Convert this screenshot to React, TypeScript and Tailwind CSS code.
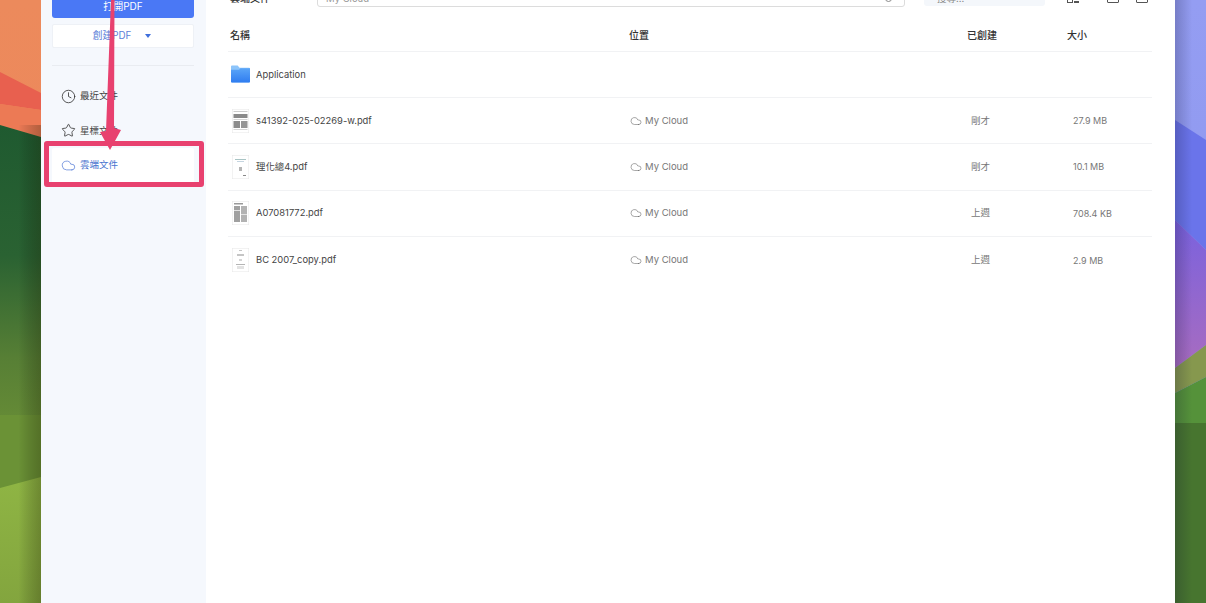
import { ReactElement } from "react"
import { ChevronRight, Clock, Cloud, Star } from "lucide-react"

const FONT = "font-['Inter','Noto_Sans_CJK_TC',sans-serif]"

const LeftWallpaper = (): ReactElement => (
  <svg className="h-full w-[41px] shrink-0" viewBox="0 0 41 603" preserveAspectRatio="none">
    <defs>
      <linearGradient id="lTop" x1="0" y1="0" x2="0" y2="1">
        <stop offset="0" stopColor="#ec8a5c" />
        <stop offset="1" stopColor="#f0855a" />
      </linearGradient>
      <linearGradient id="lGreen" x1="0" y1="0" x2="0" y2="1">
        <stop offset="0" stopColor="#1f5a30" />
        <stop offset="0.45" stopColor="#2a6232" />
        <stop offset="0.8" stopColor="#577f35" />
        <stop offset="1" stopColor="#648a36" />
      </linearGradient>
      <linearGradient id="lHill" x1="0" y1="0" x2="0" y2="1">
        <stop offset="0" stopColor="#8fb544" />
        <stop offset="1" stopColor="#83a53e" />
      </linearGradient>
      <linearGradient id="lEdge" x1="0" y1="0" x2="1" y2="0">
        <stop offset="0.45" stopColor="#000" stopOpacity="0" />
        <stop offset="1" stopColor="#1a1a00" stopOpacity="0.28" />
      </linearGradient>
    </defs>
    <rect width="41" height="603" fill="url(#lTop)" />
    <polygon points="0,72 41,93 41,110 0,104" fill="#e8604f" />
    <polygon points="0,104 41,110 41,137 0,125" fill="#ec7a55" />
    <polygon points="0,125 41,137 41,416 0,416" fill="url(#lGreen)" />
    <rect y="415" width="41" height="75" fill="#6b9236" />
    <polygon points="0,488 41,477 41,603 0,603" fill="url(#lHill)" />
    <rect x="0" y="125" width="41" height="478" fill="url(#lEdge)" />
  </svg>
)

const RightWallpaper = (): ReactElement => (
  <svg className="h-full w-[31px] shrink-0" viewBox="0 0 31 603" preserveAspectRatio="none">
    <defs>
      <linearGradient id="rPurple" x1="0" y1="0" x2="0" y2="1">
        <stop offset="0" stopColor="#7a62de" />
        <stop offset="1" stopColor="#a86cc0" />
      </linearGradient>
      <linearGradient id="rTop" x1="0" y1="0" x2="0" y2="1">
        <stop offset="0" stopColor="#949df2" />
        <stop offset="1" stopColor="#8a94ee" />
      </linearGradient>
      <linearGradient id="rEdge" x1="0" y1="0" x2="1" y2="0">
        <stop offset="0" stopColor="#101030" stopOpacity="0.22" />
        <stop offset="0.55" stopColor="#101030" stopOpacity="0" />
      </linearGradient>
    </defs>
    <rect width="31" height="603" fill="url(#rTop)" />
    <polygon points="0,120 31,140 31,250 0,220" fill="#6a74ea" />
    <polygon points="0,220 31,250 31,345 0,368" fill="url(#rPurple)" />
    <polygon points="0,368 31,345 31,377 0,393" fill="#86984e" />
    <polygon points="0,393 31,377 31,423 0,423" fill="#55923a" />
    <rect y="423" width="31" height="180" fill="#47752f" />
    <rect width="31" height="603" fill="url(#rEdge)" />
  </svg>
)

const FolderIcon = (): ReactElement => (
  <svg width="19" height="18" viewBox="0 0 20 18" className="mb-[2px]">
    <defs>
      <linearGradient id="folder" x1="0" y1="0" x2="0" y2="1">
        <stop offset="0" stopColor="#5aa5f8" />
        <stop offset="1" stopColor="#2f7cf0" />
      </linearGradient>
    </defs>
    <path d="M1 0h6l2 2.5h10a1 1 0 0 1 1 1V17a1 1 0 0 1-1 1H1a1 1 0 0 1-1-1V1a1 1 0 0 1 1-1z" fill="#8cc4fa" />
    <path d="M0 4.5l8.5 0 1.5-1.5h10V17a1 1 0 0 1-1 1H1a1 1 0 0 1-1-1z" fill="url(#folder)" />
  </svg>
)

const Thumb = ({ kind }: { kind: number }): ReactElement => (
  <svg width="17" height="24" viewBox="0 0 17 24" className="shrink-0">
    <rect x="0.25" y="0.25" width="16.5" height="23.5" fill="#fff" stroke="#e6e6e6" strokeWidth="0.5" />
    {kind === 0 && (
      <g>
        <rect x="1.5" y="2" width="14" height="1" fill="#ccc" />
        <rect x="1.5" y="5" width="14" height="4" fill="#8a8a8a" />
        <rect x="1.5" y="10" width="14" height="1" fill="#d5d5d5" />
        <rect x="1.5" y="12" width="6.5" height="7" fill="#8c8c8c" />
        <rect x="9" y="12" width="6.5" height="7" fill="#969696" />
        <rect x="1.5" y="20" width="14" height="1" fill="#d5d5d5" />
      </g>
    )}
    {kind === 1 && (
      <g>
        <rect x="3" y="4" width="11" height="1" fill="#a9c4c4" />
        <rect x="5" y="6" width="7" height="1" fill="#c5d5e0" />
        <rect x="7" y="12" width="3" height="4" fill="#b5b5b5" />
        <rect x="11" y="20" width="3" height="1" fill="#888" />
      </g>
    )}
    {kind === 2 && (
      <g>
        <rect x="2" y="2" width="9" height="1.5" fill="#999" />
        <rect x="2" y="5" width="6" height="16" fill="#a0a0a0" />
        <rect x="9" y="5" width="6" height="16" fill="#b2b2b2" />
        <rect x="2" y="9" width="6" height="1" fill="#e2e2e2" />
        <rect x="9" y="13" width="6" height="1" fill="#e2e2e2" />
      </g>
    )}
    {kind === 3 && (
      <g>
        <rect x="7" y="2" width="3" height="1" fill="#c5c5c5" />
        <rect x="5" y="6" width="7" height="2" fill="#c5c5c5" />
        <rect x="7" y="11" width="3" height="2" fill="#d5d5d5" />
        <rect x="4" y="16" width="9" height="1" fill="#b5b5b5" />
        <rect x="5" y="18" width="7" height="3" fill="#e2e2e2" />
      </g>
    )}
  </svg>
)

const files = [
  { name: "s41392-025-02269-w.pdf", when: "剛才", size: "27.9 MB" },
  { name: "理化總4.pdf", when: "剛才", size: "10.1 MB" },
  { name: "A07081772.pdf", when: "上週", size: "708.4 KB" },
  { name: "BC 2007_copy.pdf", when: "上週", size: "2.9 MB" },
]

const Sidebar = (): ReactElement => (
  <aside className="flex h-full w-[165px] shrink-0 flex-col bg-[#f5f8fd] pr-[12px] pl-[11px]">
    <div className="-mt-[18px] flex h-[36px] items-end justify-center rounded-[3px] bg-[#4a78f5] pb-[5px] text-[10px] leading-[14px] text-white">
      打開PDF
    </div>
    <div className="mt-[6px] flex h-[24px] items-center justify-center gap-[14px] rounded-[2px] border border-[#eef1f6] bg-white pr-[2px] text-[9.8px] text-[#5b80d8]">
      <span>創建PDF</span>
      <span className="h-0 w-0 border-x-[3px] border-t-[4px] border-x-transparent border-t-[#3f6fdc]" />
    </div>
    <div className="mt-[17px] h-px bg-[#e9ecf1]" />
    <nav className="mt-[13px] flex flex-col text-[9.5px] text-[#444]">
      <div className="flex h-[34.5px] items-center gap-[4px] rounded-[2px] pl-[9px]">
        <Clock size={15} strokeWidth={1.3} color="#333" />
        <span>最近文件</span>
      </div>
      <div className="flex h-[34.5px] items-center gap-[4px] rounded-[2px] pl-[9px]">
        <Star size={15} strokeWidth={1.3} color="#333" />
        <span>星標文件</span>
      </div>
      <div className="flex h-[34.5px] items-center gap-[4px] rounded-[2px] bg-white pl-[9px] text-[#4a74cf]">
        <Cloud size={15} strokeWidth={1.2} color="#5b80d8" />
        <span>雲端文件</span>
      </div>
    </nav>
  </aside>
)

const Toolbar = (): ReactElement => (
  <div className="-mt-[21px] flex h-[28px] items-end">
    <span className="mb-[2px] ml-[2px] w-[70px] text-[10px] leading-[14px] font-medium text-[#333]">雲端文件</span>
    <ChevronRight size={9} className="mb-[9px] text-[#aaa]" />
    <div className="ml-[8px] flex h-[28px] w-[588px] items-end justify-between rounded-[3px] border border-[#dcdcdc] px-[8px] pb-[1px] text-[9.5px] leading-[12px] text-[#999]">
      <span>My Cloud</span>
      <span className="mb-[3px] mr-[4px] h-[7px] w-[7px] rounded-full border border-[#888]" />
    </div>
    <div className="mb-px ml-[19px] flex h-[27px] w-[121px] items-end rounded-[3px] bg-[#f4f7fb] pb-[1px] pl-[13px] text-[9.5px] leading-[12px] text-[#888]">
      搜尋...
    </div>
    <div className="mb-[4px] ml-[22px] flex items-end">
      <span className="block h-[10px] w-[6px] border border-[#555]" />
      <span className="ml-px block h-[2px] w-[5px] bg-[#555]" />
      <span className="ml-[28px] block h-[10px] w-[12px] rounded-[1px] border border-[#555]" />
      <span className="ml-[17px] block h-[10px] w-[12px] rounded-[1px] border border-[#555]" />
    </div>
  </div>
)

const FileTable = (): ReactElement => (
  <div className="w-[924px]">
    <div className="mt-[8px] grid h-[37px] grid-cols-[399px_338px_100px_85px] items-center border-b border-[#f1f2f4] pt-[4px] pl-[2px] text-[10px] font-medium text-[#333]">
      <span>名稱</span>
      <span>位置</span>
      <span>已創建</span>
      <span>大小</span>
    </div>
    <div className="flex h-[46px] items-center gap-[6px] border-b border-[#f1f2f4] pl-[3px] text-[9.4px] text-[#444]">
      <FolderIcon />
      <span className="pt-px">Application</span>
    </div>
    {files.map((file, index) => (
      <div
        key={file.name}
        className={`grid h-[46.4px] grid-cols-[401px_338px_100px_85px] items-center text-[9.5px] text-[#777] ${index < 3 ? "border-b border-[#f1f2f4]" : ""}`}
      >
        <div className="flex items-center gap-[7px] pl-[4px] text-[9.4px] text-[#444]">
          <Thumb kind={index} />
          <span>{file.name}</span>
        </div>
        <div className="flex items-center gap-[3px] pl-px">
          <Cloud size={12} strokeWidth={1} color="#555" />
          <span>My Cloud</span>
        </div>
        <span className="pl-[4px]">{file.when}</span>
        <span className="pl-[6px] text-[9px]">{file.size}</span>
      </div>
    ))}
  </div>
)

const Annotation = (): ReactElement => (
  <>
    <svg className="pointer-events-none absolute top-0 left-[95px]" width="32" height="155" viewBox="0 0 32 155">
      <polygon points="16,0 19.5,0 19,128 26,130 15,150 5,132 11,131" fill="#e8416f" />
    </svg>
    <div className="pointer-events-none absolute top-[141px] left-[44px] h-[46px] w-[160px] rounded-[3px] border-[5px] border-[#e8416f]" />
  </>
)

const App = (): ReactElement => (
  <div className={`relative flex h-[603px] w-[1206px] overflow-hidden bg-white ${FONT}`}>
    <LeftWallpaper />
    <Sidebar />
    <main className="h-full w-[969px] shrink-0 bg-white pl-[22px]">
      <Toolbar />
      <FileTable />
    </main>
    <RightWallpaper />
    <Annotation />
  </div>
)

export default App
